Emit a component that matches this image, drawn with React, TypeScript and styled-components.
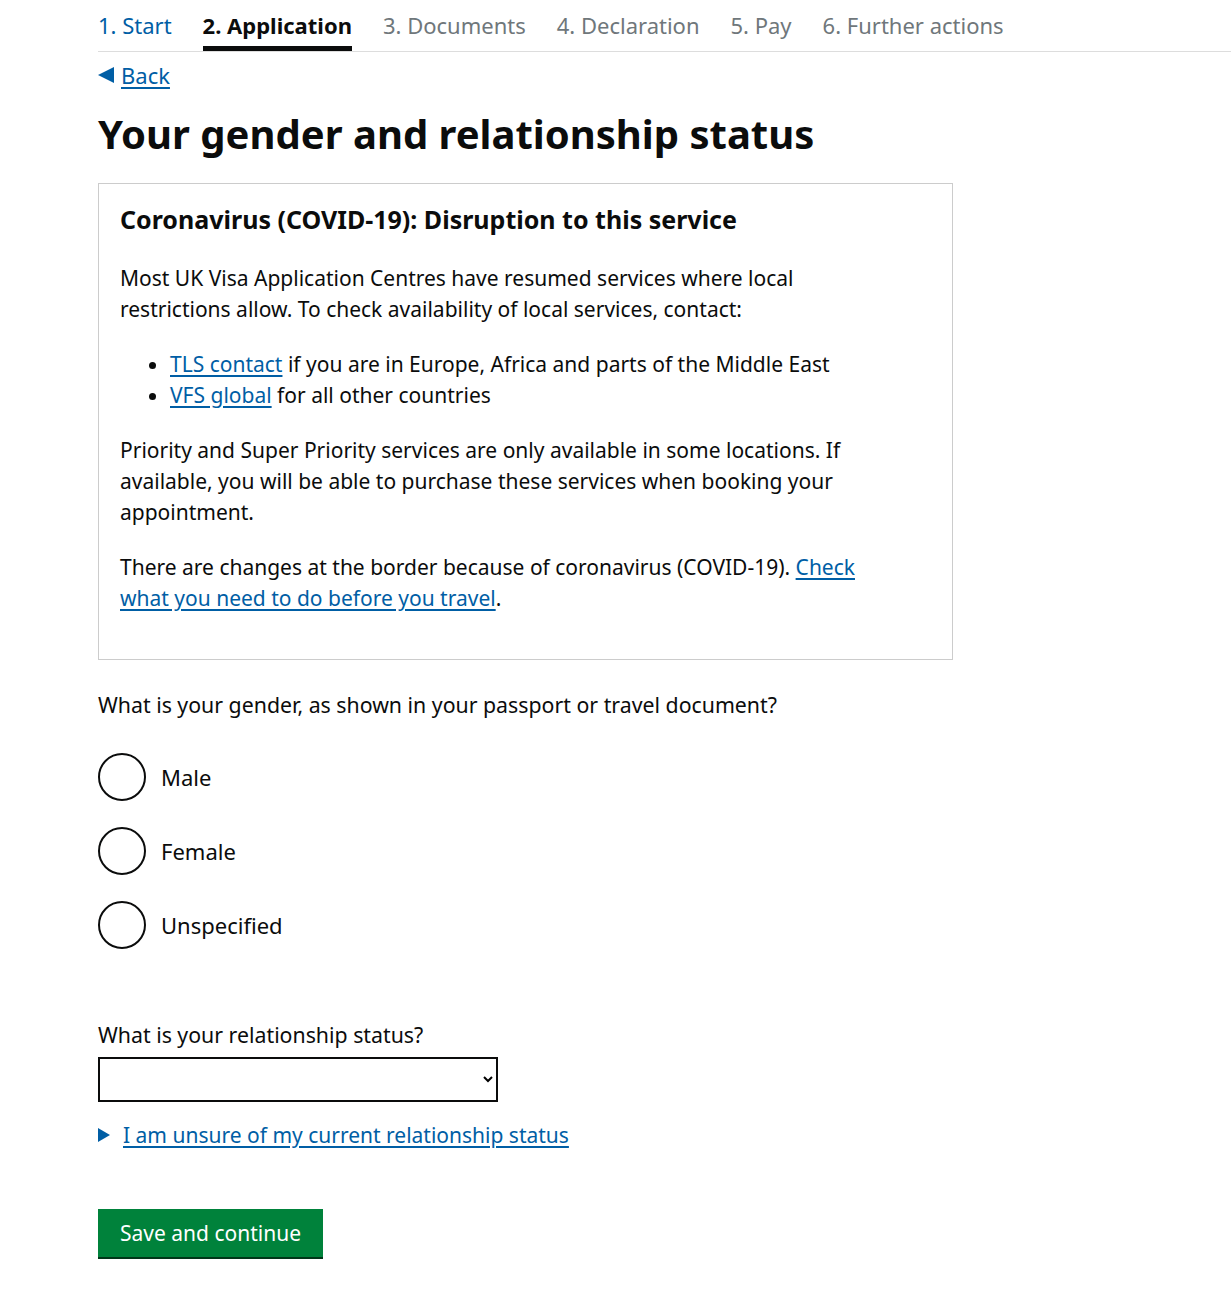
import * as React from 'react';
import styled, { createGlobalStyle } from 'styled-components';

const GlobalStyle = createGlobalStyle`
  body {
    margin: 0;
    background: #ffffff;
    color: #0b0c0c;
    font-family: "Noto Sans", "Liberation Sans", Arial, sans-serif;
  }
  * { box-sizing: border-box; }
`;

const steps = ['1. Start', '2. Application', '3. Documents', '4. Declaration', '5. Pay', '6. Further actions'];

const App = () => {
  return (
    <>
      <GlobalStyle />
      <StepNav>
        {steps.map((s, i) => (
          <Step key={s} state={i === 0 ? 'done' : i === 1 ? 'active' : 'todo'}>{s}</Step>
        ))}
      </StepNav>
      <Page>
        <BackLink href="#">Back</BackLink>
        <Title>Your gender and relationship status</Title>
        <Notice>
          <NoticeTitle>Coronavirus (COVID-19): Disruption to this service</NoticeTitle>
          <Body>
            Most UK Visa Application Centres have resumed services where local restrictions allow. To check
            availability of local services, contact:
          </Body>
          <Bullets>
            <li><Link href="#">TLS contact</Link> if you are in Europe, Africa and parts of the Middle East</li>
            <li><Link href="#">VFS global</Link> for all other countries</li>
          </Bullets>
          <Body>
            Priority and Super Priority services are only available in some locations. If available, you will be
            able to purchase these services when booking your appointment.
          </Body>
          <Body>
            There are changes at the border because of coronavirus (COVID-19). <Link href="#">Check what you need to do before you travel</Link>.
          </Body>
        </Notice>
        <Question>What is your gender, as shown in your passport or travel document?</Question>
        <Radios>
          {['Male', 'Female', 'Unspecified'].map(o => (
            <RadioRow key={o}>
              <RadioCircle />
              <RadioLabel>{o}</RadioLabel>
            </RadioRow>
          ))}
        </Radios>
        <SelectLabel>What is your relationship status?</SelectLabel>
        <Select>
          <option value=""></option>
        </Select>
        <Details>
          <Triangle />
          <Link href="#">I am unsure of my current relationship status</Link>
        </Details>
        <Button>Save and continue</Button>
      </Page>
    </>
  );
};

const StepNav = styled.nav`
  display: flex;
  gap: 31px;
  margin-left: 98px;
  height: 52px;
  border-bottom: 1px solid #dddddd;
  padding-top: 10px;
`;

const Step = styled.span<{ state: 'done' | 'active' | 'todo' }>`
  font-size: 22px;
  height: 41px;
  color: ${p => (p.state === 'done' ? '#005ea5' : p.state === 'active' ? '#0b0c0c' : '#6f777b')};
  font-weight: ${p => (p.state === 'active' ? 700 : 400)};
  border-bottom: ${p => (p.state === 'active' ? '5px solid #0b0c0c' : '5px solid transparent')};
`;

const Page = styled.main`
  padding: 0 0 40px 98px;
`;

const BackLink = styled.a`
  display: inline-flex;
  align-items: center;
  margin-top: 8px;
  font-size: 22px;
  color: #005ea5;
  text-decoration: underline;
  text-underline-offset: 3px;
  &::before {
    content: '';
    width: 0;
    height: 0;
    border-top: 8px solid transparent;
    border-bottom: 8px solid transparent;
    border-right: 16px solid #005ea5;
    margin-right: 7px;
  }
`;

const Title = styled.h1`
  font-size: 40px;
  font-weight: 700;
  margin: 20px 0 25px;
  line-height: 1.2;
`;

const Notice = styled.section`
  width: 855px;
  border: 1px solid #cccccc;
  padding: 18px 21px 21px;
`;

const NoticeTitle = styled.h2`
  font-size: 25px;
  font-weight: 700;
  margin: 0 0 27px;
`;

const Body = styled.p`
  max-width: 770px;
  font-size: 21px;
  line-height: 31px;
  margin: 0 0 24px;
`;

const Bullets = styled.ul`
  font-size: 21px;
  line-height: 31px;
  margin: 0 0 24px;
  padding-left: 50px;
`;

const Link = styled.a`
  color: #005ea5;
  text-decoration: underline;
  text-underline-offset: 3px;
`;

const Question = styled.p`
  font-size: 21.3px;
  margin: 30px 0 34px;
`;

const Radios = styled.div`
  display: flex;
  flex-direction: column;
  gap: 26px;
`;

const RadioRow = styled.label`
  display: flex;
  align-items: center;
  gap: 15px;
`;

const RadioCircle = styled.span`
  width: 48px;
  height: 48px;
  border: 2px solid #0b0c0c;
  border-radius: 50%;
`;

const RadioLabel = styled.span`
  font-size: 22px;
`;

const SelectLabel = styled.p`
  font-size: 21.3px;
  margin: 71px 0 8px;
`;

const Select = styled.select`
  display: block;
  width: 400px;
  height: 45px;
  border: 2px solid #0b0c0c;
  background: #fff;
  border-radius: 0;
  font-size: 19px;
`;

const Details = styled.div`
  display: flex;
  align-items: center;
  gap: 13px;
  margin-top: 19px;
  font-size: 21px;
`;

const Triangle = styled.span`
  width: 0;
  height: 0;
  border-top: 7px solid transparent;
  border-bottom: 7px solid transparent;
  border-left: 12px solid #005ea5;
`;

const Button = styled.button`
  display: block;
  margin-top: 60px;
  background: #00823b;
  color: #ffffff;
  border: none;
  box-shadow: 0 2px 0 #003618;
  font-family: inherit;
  font-size: 21px;
  padding: 10px 22px;
  height: 48px;
`;

export default App;
